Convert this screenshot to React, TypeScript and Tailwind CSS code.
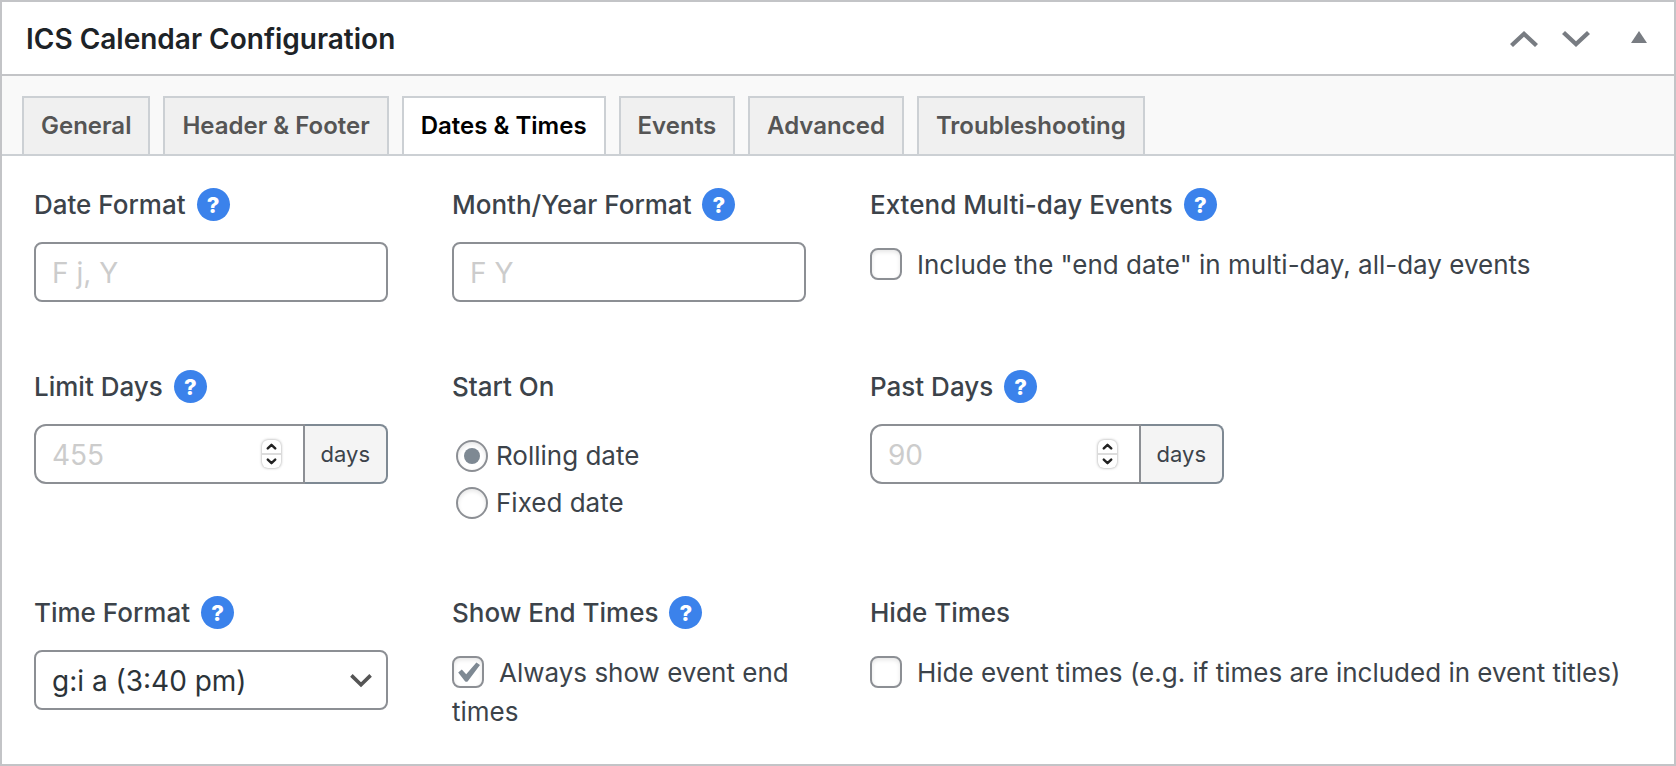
import { useState, type ReactNode } from 'react'

const TABS = ['General', 'Header & Footer', 'Dates & Times', 'Events', 'Advanced', 'Troubleshooting']

function Help({ topic }: { topic: string }) {
  return (
    <button
      type="button"
      aria-label={`Help: ${topic}`}
      className="flex size-[33px] shrink-0 items-center justify-center rounded-full bg-[#3b82eb] text-[22px] leading-none font-extrabold text-white"
    >
      ?
    </button>
  )
}

function Field({ label, htmlFor, help, wide, children }: {
  label: string
  htmlFor?: string
  help?: boolean
  wide?: boolean
  children: ReactNode
}) {
  return (
    <div className={wide ? 'col-span-2' : ''}>
      <div className="mb-[21px] flex h-[33px] items-center gap-[11px] font-medium">
        {htmlFor ? <label htmlFor={htmlFor}>{label}</label> : <span>{label}</span>}
        {help && <Help topic={label} />}
      </div>
      {children}
    </div>
  )
}

function TextField({ id, placeholder }: { id: string; placeholder: string }) {
  return (
    <input
      id={id}
      type="text"
      placeholder={placeholder}
      className="block h-[60px] w-full rounded-lg border-2 border-[#8c8f94] bg-white px-4 pt-0.5 text-[28px] text-[#2c3338] placeholder:text-[#cccccc]"
    />
  )
}

function DaysField({ id, placeholder }: { id: string; placeholder: string }) {
  const [value, setValue] = useState('')
  const step = (n: number) => setValue(String(Math.max(0, Number(value || placeholder) + n)))

  return (
    <div className="flex h-[60px]">
      <div className="relative min-w-0 flex-1">
        <input
          id={id}
          type="number"
          value={value}
          onChange={e => setValue(e.target.value)}
          placeholder={placeholder}
          className="h-full w-full appearance-none rounded-l-xl border-2 border-[#8c8f94] bg-white px-4 pt-0.5 text-[28px] text-[#2c3338] [-moz-appearance:textfield] placeholder:text-[#cccccc] [&::-webkit-inner-spin-button]:appearance-none"
        />
        <div className="absolute top-4 right-6 flex h-7 w-[19px] flex-col overflow-hidden rounded-md bg-white shadow-[0_0_3px_rgba(0,0,0,0.4)]">
          <button type="button" aria-label="More days" onClick={() => step(1)} className="flex flex-1 items-center justify-center border-b-2 border-[#dcdcdc]">
            <svg width="11" height="7" viewBox="0 0 11 7" fill="none" stroke="#222" strokeWidth="2.4" strokeLinecap="round" strokeLinejoin="round">
              <path d="M1.8 5.4 5.5 1.8l3.7 3.6" />
            </svg>
          </button>
          <button type="button" aria-label="Fewer days" onClick={() => step(-1)} className="flex flex-1 items-center justify-center">
            <svg width="11" height="7" viewBox="0 0 11 7" fill="none" stroke="#222" strokeWidth="2.4" strokeLinecap="round" strokeLinejoin="round">
              <path d="m1.8 1.6 3.7 3.6 3.7-3.6" />
            </svg>
          </button>
        </div>
      </div>
      <span className="flex items-center rounded-r-lg border-2 border-l-0 border-[#7e8993] bg-[#f4f4f4] px-4 text-[22px]">
        days
      </span>
    </div>
  )
}

function Check({ label, defaultChecked }: { label: string; defaultChecked?: boolean }) {
  return (
    <label className="block pt-[3px] leading-[39px]">
      <span className="relative mr-[15px] inline-block size-8 align-[-6px]">
        <input
          type="checkbox"
          defaultChecked={defaultChecked}
          className="peer block size-8 appearance-none rounded-lg border-2 border-[#8c8f94] bg-white shadow-[inset_0_2px_4px_rgba(0,0,0,0.1)]"
        />
        <svg className="pointer-events-none absolute inset-0 hidden peer-checked:block" width="32" height="32" viewBox="0 0 32 32" fill="#7e8993">
          <path d="M24.4 6.4 28 9 15.8 25.2q-1.4 1.3-2.8 0L6.2 16.4l3.6-2.8 4.4 4.6Z" />
        </svg>
      </span>
      {label}
    </label>
  )
}

function Radio({ label, value, defaultChecked }: { label: string; value: string; defaultChecked?: boolean }) {
  return (
    <label className="flex h-[47px] items-center gap-2">
      <input
        type="radio"
        name="start-on"
        value={value}
        defaultChecked={defaultChecked}
        className="flex size-8 appearance-none items-center justify-center rounded-full border-2 border-[#8c8f94] bg-white shadow-[inset_0_2px_4px_rgba(0,0,0,0.1)] before:size-4 before:rounded-full checked:before:bg-[#7e8993]"
      />
      {label}
    </label>
  )
}

export default function App() {
  const [tab, setTab] = useState('Dates & Times')

  return (
    <section className="min-h-screen border-2 border-[#c3c4c7] bg-white font-['Inter','Liberation_Sans',sans-serif] text-[26px] text-[#3c434a]">
      <header className="flex h-[74px] items-center justify-between border-b-2 border-[#c3c4c7] pt-0.5 pr-[27px] pl-6">
        <h2 className="text-[28px] font-semibold text-[#1d2327]">ICS Calendar Configuration</h2>
        <div className="flex items-center">
          <button type="button" aria-label="Move up">
            <svg width="28" height="18" viewBox="0 0 28 18" fill="#787c82">
              <path d="M14 1 28 14l-3 3L14 6.800 3 17l-3-3Z" />
            </svg>
          </button>
          <button type="button" aria-label="Move down" className="ml-6">
            <svg width="28" height="18" viewBox="0 0 28 18" fill="#787c82">
              <path d="M14 17 0 4l3-3 11 10.200L25 1l3 3Z" />
            </svg>
          </button>
          <button type="button" aria-label="Toggle panel" className="ml-[41px]">
            <svg width="16" height="16" viewBox="0 0 16 16" fill="#787c82">
              <path d="M8 0l8 12H0Z" />
            </svg>
          </button>
        </div>
      </header>

      <nav role="tablist" className="flex h-20 items-end gap-[13px] border-b-2 border-[#ccd0d4] bg-[#f9f9f9] px-5">
        {TABS.map(name => (
          <button
            key={name}
            type="button"
            role="tab"
            aria-selected={name === tab}
            onClick={() => setTab(name)}
            className={`h-[58px] border-2 border-b-0 border-[#ccd0d4] px-[17px] text-[24px] font-semibold whitespace-nowrap ${name === tab ? 'bg-white text-black' : 'bg-[#f0f0f0] text-[#555555]'}`}
          >
            {name}
          </button>
        ))}
      </nav>

      <form className="grid grid-cols-4 gap-x-16 gap-y-[68px] p-8">
        <Field label="Date Format" htmlFor="date-format" help>
          <TextField id="date-format" placeholder="F j, Y" />
        </Field>
        <Field label="Month/Year Format" htmlFor="month-format" help>
          <TextField id="month-format" placeholder="F Y" />
        </Field>
        <Field label="Extend Multi-day Events" help wide>
          <Check label={'Include the "end date" in multi-day, all-day events'} />
        </Field>

        <Field label="Limit Days" htmlFor="limit-days" help>
          <DaysField id="limit-days" placeholder="455" />
        </Field>
        <Field label="Start On">
          <div className="pt-2 pb-0.5 pl-1">
            <Radio label="Rolling date" value="rolling" defaultChecked />
            <Radio label="Fixed date" value="fixed" />
          </div>
        </Field>
        <Field label="Past Days" htmlFor="past-days" help wide>
          <div className="w-[354px]">
            <DaysField id="past-days" placeholder="90" />
          </div>
        </Field>

        <Field label="Time Format" htmlFor="time-format" help>
          <div className="relative">
            <select
              id="time-format"
              className="block h-[60px] w-full appearance-none rounded-lg border-2 border-[#8c8f94] bg-white px-4 pt-0.5 text-[28px] text-[#2c3338]"
            >
              <option>g:i a (3:40 pm)</option>
            </select>
            <svg className="pointer-events-none absolute top-6 right-4" width="22" height="14" viewBox="0 0 22 14" fill="none" stroke="#555" strokeWidth="3.6">
              <path d="M1.400 1.400 11 10.800l9.600-9.400" />
            </svg>
          </div>
        </Field>
        <Field label="Show End Times" help>
          <Check label="Always show event end times" defaultChecked />
        </Field>
        <Field label="Hide Times" wide>
          <Check label="Hide event times (e.g. if times are included in event titles)" />
        </Field>
      </form>
    </section>
  )
}
